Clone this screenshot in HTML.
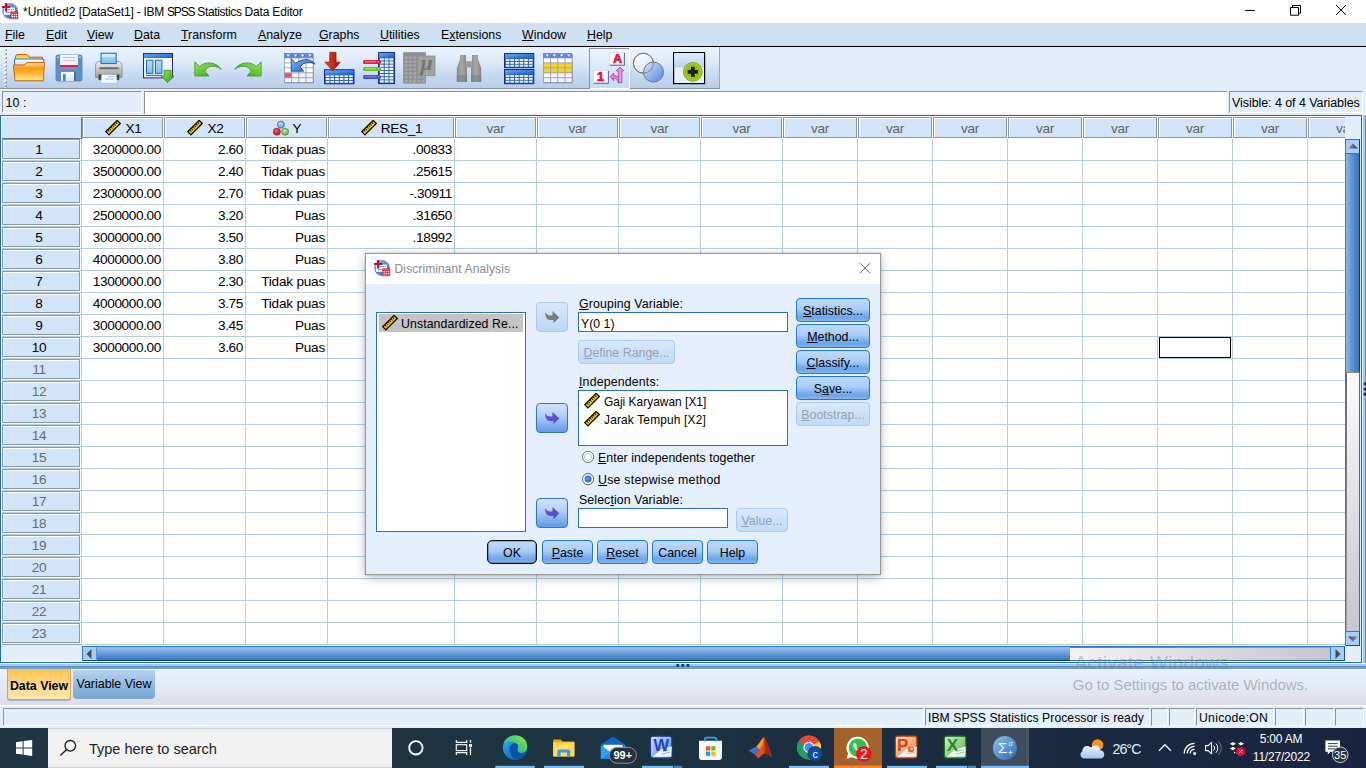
<!DOCTYPE html><html><head><meta charset="utf-8"><title>IBM SPSS Statistics Data Editor</title><style>
html,body{margin:0;padding:0}
body{width:1366px;height:768px;overflow:hidden;position:relative;background:#e4eefb;font-family:"Liberation Sans",sans-serif;font-size:12px;color:#000;line-height:1}
.a{position:absolute}
.a *{box-sizing:border-box}
div{box-sizing:border-box}
u{text-decoration:underline;text-underline-offset:1px}
#title{left:0;top:0;width:1366px;height:23px;background:#fff}
#title .t{left:23px;top:6px;font-size:12px;white-space:nowrap;letter-spacing:-.27px}
#menu{left:0;top:23px;width:1366px;height:23px;background:#cfe0f1}
#menu span{position:absolute;top:6px;font-size:12.35px;white-space:nowrap}
#mline{left:0;top:46px;width:1366px;height:1px;background:#000}
#tb{left:0;top:47px;width:720px;height:42px;background:linear-gradient(#ebf3fc 0%,#dfeaf8 35%,#c5d8f0 70%,#b6cdea 100%);border-right:1px solid #9aa7b8;border-bottom:1px solid #8e9298}
#tbline{left:0;top:89px;width:720px;height:1px;background:#eef5fd}
.rh{left:2px;width:78px;height:20px;background:#d2e4fa;border:1px solid #8c97a8;box-shadow:inset 1px 1px 0 #fff;text-align:center;font-size:13.6px;line-height:19.2px;letter-spacing:-.3px;padding-right:4px}
.ch{top:117px;height:21px;background:#d2e4fa;border:1px solid #8c97a8;box-shadow:inset 1px 1px 0 #fff;font-size:13.6px;line-height:19px;white-space:nowrap;overflow:hidden;display:flex;align-items:center;justify-content:center;letter-spacing:-.3px}
.ch span{display:block;height:19px;line-height:21.6px}
.cv{color:#626262}
.hl{left:2px;height:1px;background:#b5cce6}
.vl{top:139px;width:1px;background:#b5cce6}
.c{font-size:13.6px;text-align:right;white-space:nowrap;height:22px;line-height:24.6px}
.c.n{letter-spacing:-.36px}
.c.t{letter-spacing:-.22px}

.dl{font-size:12.3px;white-space:nowrap}
.btn{border:1px solid #1f78d8;border-radius:4px;background:linear-gradient(#bfdaf9 0%,#aacdf6 45%,#7db0ed 70%,#6ba5ea 85%,#86b8f0 100%);font-size:12.4px;line-height:24px;text-align:center;white-space:nowrap}
.btn.dis{border-color:#a8c9ee;background:linear-gradient(#dae9fb,#cbe0f8 50%,#c2dbf7);color:#93a2b4}
.btn.dflt{border:1px solid #101010;box-shadow:inset 0 0 0 .6px rgba(20,30,50,.55);border-radius:5px}
</style></head><body>
<div class="a" id="title"><span class="a t"><span style="letter-spacing:.04px">*Untitled2 </span><span style="letter-spacing:-.2px">[DataSet1] </span>- IBM <span style="letter-spacing:-1.2px">SPSS</span> <span style="letter-spacing:-.38px">Statistics </span><span style="letter-spacing:-.17px">Data Editor</span></span></div>
<svg class="a" style="left:1240px;top:0" width="120" height="23" viewBox="1240 0 120 23"><path d="M1245 10.5h10" stroke="#000" stroke-width="1"/><path d="M1290.5 7.5h8v7.7h-8z M1292.5 7.5v-2h8v7.7h-2" fill="none" stroke="#000" stroke-width="1"/><path d="M1336 5 L1346 15 M1346 5 L1336 15" stroke="#000" stroke-width="1"/></svg>
<div class="a" id="menu"><span style="left:5px"><u>F</u>ile</span><span style="left:46px"><u>E</u>dit</span><span style="left:87px"><u>V</u>iew</span><span style="left:134px"><u>D</u>ata</span><span style="left:181px"><u>T</u>ransform</span><span style="left:258px"><u>A</u>nalyze</span><span style="left:319px"><u>G</u>raphs</span><span style="left:380px"><u>U</u>tilities</span><span style="left:441px">E<u>x</u>tensions</span><span style="left:522px"><u>W</u>indow</span><span style="left:587px"><u>H</u>elp</span></div><div class="a" id="mline"></div>
<div class="a" id="tb"></div><div class="a" id="tbline"></div>
<svg class="a" style="left:0;top:46px" width="722" height="44" viewBox="0 46 722 44"><defs>
<linearGradient id="gFo" x1="0" y1="0" x2="0" y2="1"><stop offset="0" stop-color="#ffe6c4"/><stop offset=".28" stop-color="#ff9a14"/><stop offset=".6" stop-color="#ffb638"/><stop offset="1" stop-color="#fff08c"/></linearGradient>
<linearGradient id="gFb" x1="0" y1="0" x2="0" y2="1"><stop offset="0" stop-color="#ffc61a"/><stop offset="1" stop-color="#fff0a0"/></linearGradient>
<linearGradient id="gPa" x1="0" y1="0" x2="0" y2="1"><stop offset="0" stop-color="#ffffff"/><stop offset="1" stop-color="#b8daf5"/></linearGradient>
<linearGradient id="gPr" x1="0" y1="0" x2="0" y2="1"><stop offset="0" stop-color="#f2f2f2"/><stop offset=".5" stop-color="#c4c4c4"/><stop offset="1" stop-color="#9a9a9a"/></linearGradient>
<linearGradient id="gHd" x1="0" y1="0" x2="1" y2="1"><stop offset="0" stop-color="#6aaaf0"/><stop offset="1" stop-color="#1a5ad0"/></linearGradient>
<linearGradient id="gGr" x1="0" y1="0" x2="1" y2="1"><stop offset="0" stop-color="#9be85a"/><stop offset="1" stop-color="#2f9c14"/></linearGradient>
<linearGradient id="gRd" x1="0" y1="0" x2="1" y2="0"><stop offset="0" stop-color="#e84a30"/><stop offset="1" stop-color="#98140a"/></linearGradient>
<linearGradient id="gBl" x1="0" y1="0" x2="1" y2="1"><stop offset="0" stop-color="#7ab4f4"/><stop offset="1" stop-color="#1e5cc8"/></linearGradient>
<linearGradient id="gWb" x1="0" y1="0" x2="0" y2="1"><stop offset="0" stop-color="#ffffff"/><stop offset="1" stop-color="#dfe3ea"/></linearGradient>
<linearGradient id="gLb" x1="0" y1="0" x2="0" y2="1"><stop offset="0" stop-color="#b6dcf4"/><stop offset="1" stop-color="#7fc0ea"/></linearGradient>
<linearGradient id="gC1" x1="0" y1="0" x2="1" y2="1"><stop offset="0" stop-color="#ffffff"/><stop offset="1" stop-color="#d4dff2"/></linearGradient>
<linearGradient id="gC2" x1="0" y1="0" x2="1" y2="1"><stop offset="0" stop-color="#d6e6fb"/><stop offset="1" stop-color="#4f84e0"/></linearGradient>
<linearGradient id="gBx" x1="0" y1="0" x2="0" y2="1"><stop offset="0" stop-color="#e4eefb"/><stop offset="1" stop-color="#b9d0ee"/></linearGradient>
<linearGradient id="gPb" x1="0" y1="0" x2="0" y2="1"><stop offset="0" stop-color="#edf4fc"/><stop offset="1" stop-color="#c6daf1"/></linearGradient>
<linearGradient id="gBn" x1="0" y1="0" x2="1" y2="0"><stop offset="0" stop-color="#8c8c8c"/><stop offset=".5" stop-color="#a8a8a8"/><stop offset="1" stop-color="#868686"/></linearGradient>
<pattern id="pDot" x="4" y="48" width="4" height="4" patternUnits="userSpaceOnUse"><rect x="1" y="1" width="2" height="2" fill="#8c9cb4"/><rect x="0" y="0" width="2" height="2" fill="#ffffff"/></pattern>
</defs><rect x="4" y="48" width="3" height="40" fill="url(#pDot)"/><path d="M15.5 62 L15.5 57 Q15.5 54.5 18 54.5 L26 54.5 Q27.8 54.5 28.5 56 L29 57.2 L42.5 57.2 L42.5 62Z" fill="url(#gFb)" stroke="#c4640a" stroke-width="1"/><path d="M14.5 66 L14.5 59 L43.8 59 L43.8 66Z" fill="url(#gPa)" stroke="#2a6ed6" stroke-width="1"/><path d="M13.4 65 L24.6 65 L26.6 62.6 L44.6 62.6 L43.2 80.8 L15 80.8Z" fill="url(#gFo)" stroke="#c4640a" stroke-width="1" stroke-linejoin="round"/><rect x="56" y="55" width="26" height="26" rx="2" fill="#5c90c8"/><rect x="56" y="55" width="26" height="26" rx="2" fill="none" stroke="#4a7fba" stroke-width=".8"/><rect x="60" y="55" width="18" height="10.2" fill="#eef3fa"/><path d="M63 57.6h12M63 60.6h12" stroke="#b4bcc8" stroke-width=".9"/><rect x="60" y="65" width="18" height="3" fill="#d81e50"/><rect x="60" y="67.4" width="18" height=".9" fill="#f090a8"/><rect x="61" y="72" width="15.6" height="9" fill="url(#gWb)"/><rect x="74" y="72" width="2.6" height="9" fill="#3f6ea8"/><rect x="63" y="74" width="2.6" height="7" fill="#4a80c0"/><rect x="57.2" y="56.6" width="1.8" height="1.2" fill="#dfe8f4"/><rect x="79" y="56.6" width="1.8" height="1.2" fill="#dfe8f4"/><path d="M95.5 77.5 L95.5 66 Q95.5 61.5 100 61.5 L117.5 61.5 Q122 61.5 122 66 L122 77.5Z" fill="url(#gPr)" stroke="#8a8a8a" stroke-width=".8"/><rect x="101" y="53.2" width="15.2" height="10.4" fill="url(#gLb)" stroke="#1c66d4" stroke-width="1"/><rect x="102" y="54.2" width="13.2" height="3" fill="#e8f4fc" opacity=".7"/><rect x="99.5" y="67.2" width="18.5" height="2.2" fill="#6e6e6e"/><rect x="118.2" y="67.6" width="1.6" height="1.6" fill="#40c040"/><rect x="98.6" y="74.5" width="20.6" height="5.6" fill="#3c3c3c"/><path d="M101.6 74.6 L116.4 74.6 L117.4 83.4 L100.8 83.4Z" fill="#f2f8fd" stroke="#9ab4d0" stroke-width=".7"/><path d="M108 76.6h6M105 79h9" stroke="#a8b4c4" stroke-width=".9"/><rect x="143.5" y="53.5" width="29" height="24.4" fill="url(#gWb)" stroke="#2a2a6e" stroke-width="1"/><rect x="144" y="54" width="28" height="4" fill="url(#gHd)"/><rect x="146.5" y="60.3" width="6.4" height="13" fill="url(#gLb)" stroke="#1a6ad8" stroke-width="1"/><rect x="155.5" y="60.3" width="6.4" height="13" fill="url(#gLb)" stroke="#1a6ad8" stroke-width="1"/><path d="M146 75.4h16.4" stroke="#1a6ad8" stroke-width="1"/><path d="M164.2 70.4 L171 70.4 L171 76.2 L174 76.2 L167.6 82.6 L161.4 76.2 L164.2 76.2Z" fill="url(#gGr)" stroke="#2c8c14" stroke-width=".8" stroke-linejoin="round"/><path transform="translate(194.8 62)" d="M0 0 L4.9 4.5 C8 1.5 12 0.6 15.4 1 C20 1.3 24 3.5 26.4 7.3 C23 4.6 19 3.6 15.4 4.6 C12.5 5.5 11 7 10.2 9.2 L14 14 L0 14 Z" fill="url(#gGr)" stroke="#3a9a1c" stroke-width=".8" stroke-linejoin="round"/><path transform="translate(261.2 62) scale(-1 1)" d="M0 0 L4.9 4.5 C8 1.5 12 0.6 15.4 1 C20 1.3 24 3.5 26.4 7.3 C23 4.6 19 3.6 15.4 4.6 C12.5 5.5 11 7 10.2 9.2 L14 14 L0 14 Z" fill="url(#gGr)" stroke="#3a9a1c" stroke-width=".8" stroke-linejoin="round"/><rect x="284.6" y="53.7" width="28.9" height="29.5" fill="#3c4a78" opacity=".8"/><rect x="284" y="53.1" width="28.9" height="29.5" fill="#9aa0ae"/><rect x="284" y="53.1" width="28.9" height="4.6" fill="#5a86e0"/><path d="M286.5 54.5 h3.4 l-1.7 2.2z" fill="#fff"/><rect x="284.9" y="58.40" width="6.2" height="4" fill="#ffffff"/><rect x="284.9" y="63.35" width="6.2" height="4" fill="#ffffff"/><rect x="284.9" y="68.30" width="6.2" height="4" fill="#ffffff"/><rect x="284.9" y="73.25" width="6.2" height="4" fill="#f0506a"/><rect x="284.9" y="78.20" width="6.2" height="4" fill="#f2f3f8"/><path d="M293.7 54.5 h3.4 l-1.7 2.2z" fill="#fff"/><rect x="292.1" y="58.40" width="6.2" height="4" fill="#ffffff"/><rect x="292.1" y="63.35" width="6.2" height="4" fill="#ffffff"/><rect x="292.1" y="68.30" width="6.2" height="4" fill="#ffffff"/><rect x="292.1" y="73.25" width="6.2" height="4" fill="#f2f3f8"/><rect x="292.1" y="78.20" width="6.2" height="4" fill="#f2f3f8"/><path d="M300.9 54.5 h3.4 l-1.7 2.2z" fill="#fff"/><rect x="299.3" y="58.40" width="6.2" height="4" fill="#ffffff"/><rect x="299.3" y="63.35" width="6.2" height="4" fill="#ffffff"/><rect x="299.3" y="68.30" width="6.2" height="4" fill="#ffffff"/><rect x="299.3" y="73.25" width="6.2" height="4" fill="#f2f3f8"/><rect x="299.3" y="78.20" width="6.2" height="4" fill="#f2f3f8"/><path d="M308.1 54.5 h3.4 l-1.7 2.2z" fill="#fff"/><rect x="306.5" y="58.40" width="6.2" height="4" fill="#ffffff"/><rect x="306.5" y="63.35" width="6.2" height="4" fill="#ffffff"/><rect x="306.5" y="68.30" width="6.2" height="4" fill="#ffffff"/><rect x="306.5" y="73.25" width="6.2" height="4" fill="#f2f3f8"/><rect x="306.5" y="78.20" width="6.2" height="4" fill="#f2f3f8"/><path transform="translate(291.2 58.6)" d="M0 0 L0 12.6 L12.6 12.6 L9 8.4 C10.5 5.5 14 3.6 18 3.8 C20.5 4 22.5 4.6 23.8 5.6 C21.5 2 17.5 0.6 13.5 1 C9.5 1.4 6.5 3 4.6 4.8 Z" fill="url(#gBl)" stroke="#1a3c90" stroke-width=".8" stroke-linejoin="round"/><rect x="324.5" y="69.8" width="29.5" height="14" fill="#1c5cd0" stroke="#1a2880" stroke-width="1"/><rect x="325.0" y="70.3" width="28.5" height="4.4" fill="url(#gHd)"/><rect x="325.80" y="75.30" width="3.65" height="1.85" fill="#fff"/><rect x="325.80" y="78.10" width="3.65" height="1.85" fill="#fff"/><rect x="325.80" y="80.90" width="3.65" height="1.85" fill="#fff"/><rect x="330.45" y="75.30" width="3.65" height="1.85" fill="#fff"/><rect x="330.45" y="78.10" width="3.65" height="1.85" fill="#fff"/><rect x="330.45" y="80.90" width="3.65" height="1.85" fill="#fff"/><rect x="335.10" y="75.30" width="3.65" height="1.85" fill="#fff"/><rect x="335.10" y="78.10" width="3.65" height="1.85" fill="#fff"/><rect x="335.10" y="80.90" width="3.65" height="1.85" fill="#fff"/><rect x="339.75" y="75.30" width="3.65" height="1.85" fill="#fff"/><rect x="339.75" y="78.10" width="3.65" height="1.85" fill="#fff"/><rect x="339.75" y="80.90" width="3.65" height="1.85" fill="#fff"/><rect x="344.40" y="75.30" width="3.65" height="1.85" fill="#fff"/><rect x="344.40" y="78.10" width="3.65" height="1.85" fill="#fff"/><rect x="344.40" y="80.90" width="3.65" height="1.85" fill="#fff"/><rect x="349.05" y="75.30" width="3.65" height="1.85" fill="#fff"/><rect x="349.05" y="78.10" width="3.65" height="1.85" fill="#fff"/><rect x="349.05" y="80.90" width="3.65" height="1.85" fill="#fff"/><path d="M329.8 52.4 L336 52.4 L336 62.2 L340.2 62.2 L332.8 70.8 L325 62.2 L329.8 62.2Z" fill="url(#gRd)" stroke="#8a1a0c" stroke-width=".8" stroke-linejoin="round"/><rect x="378.6" y="52.6" width="16" height="31" fill="#1c5cd0" stroke="#1a2880" stroke-width="1"/><rect x="379.1" y="53.1" width="15" height="4.6" fill="url(#gHd)"/><rect x="379.90" y="58.30" width="3.80" height="2.20" fill="#fff"/><rect x="379.90" y="61.45" width="3.80" height="2.20" fill="#fff"/><rect x="379.90" y="64.60" width="3.80" height="2.20" fill="#fff"/><rect x="379.90" y="67.75" width="3.80" height="2.20" fill="#fff"/><rect x="379.90" y="70.90" width="3.80" height="2.20" fill="#fff"/><rect x="379.90" y="74.05" width="3.80" height="2.20" fill="#fff"/><rect x="379.90" y="77.20" width="3.80" height="2.20" fill="#fff"/><rect x="379.90" y="80.35" width="3.80" height="2.20" fill="#fff"/><rect x="384.70" y="58.30" width="3.80" height="2.20" fill="#fff"/><rect x="384.70" y="61.45" width="3.80" height="2.20" fill="#fff"/><rect x="384.70" y="64.60" width="3.80" height="2.20" fill="#fff"/><rect x="384.70" y="67.75" width="3.80" height="2.20" fill="#fff"/><rect x="384.70" y="70.90" width="3.80" height="2.20" fill="#fff"/><rect x="384.70" y="74.05" width="3.80" height="2.20" fill="#fff"/><rect x="384.70" y="77.20" width="3.80" height="2.20" fill="#fff"/><rect x="384.70" y="80.35" width="3.80" height="2.20" fill="#fff"/><rect x="389.50" y="58.30" width="3.80" height="2.20" fill="#fff"/><rect x="389.50" y="61.45" width="3.80" height="2.20" fill="#fff"/><rect x="389.50" y="64.60" width="3.80" height="2.20" fill="#fff"/><rect x="389.50" y="67.75" width="3.80" height="2.20" fill="#fff"/><rect x="389.50" y="70.90" width="3.80" height="2.20" fill="#fff"/><rect x="389.50" y="74.05" width="3.80" height="2.20" fill="#fff"/><rect x="389.50" y="77.20" width="3.80" height="2.20" fill="#fff"/><rect x="389.50" y="80.35" width="3.80" height="2.20" fill="#fff"/><rect x="363" y="60.1" width="18" height="4" rx="1.6" fill="#e21e4c"/><path d="M365 61.800000000000004h11M377.4 61.800000000000004h1.6" stroke="#f4a060" stroke-width="1"/><rect x="363" y="67.1" width="18" height="4" rx="1.6" fill="#58c61e"/><path d="M365 68.8h11M377.4 68.8h1.6" stroke="#b8ec80" stroke-width="1"/><rect x="363" y="75" width="18" height="4" rx="1.6" fill="#3a58e0"/><path d="M365 76.7h11M377.4 76.7h1.6" stroke="#a070e8" stroke-width="1"/><rect x="403.1" y="52.2" width="22.8" height="31.4" fill="#8e8e8e"/><rect x="404.6" y="56.4" width="3" height="2.6" fill="#a6a6a6"/><rect x="404.6" y="60.3" width="3" height="2.6" fill="#a6a6a6"/><rect x="404.6" y="64.2" width="3" height="2.6" fill="#a6a6a6"/><rect x="404.6" y="68.1" width="3" height="2.6" fill="#a6a6a6"/><rect x="404.6" y="72.0" width="3" height="2.6" fill="#a6a6a6"/><rect x="404.6" y="75.9" width="3" height="2.6" fill="#a6a6a6"/><rect x="404.6" y="79.8" width="3" height="2.6" fill="#a6a6a6"/><rect x="408.9" y="56.4" width="3" height="2.6" fill="#a6a6a6"/><rect x="408.9" y="60.3" width="3" height="2.6" fill="#a6a6a6"/><rect x="408.9" y="64.2" width="3" height="2.6" fill="#a6a6a6"/><rect x="408.9" y="68.1" width="3" height="2.6" fill="#a6a6a6"/><rect x="408.9" y="72.0" width="3" height="2.6" fill="#a6a6a6"/><rect x="408.9" y="75.9" width="3" height="2.6" fill="#a6a6a6"/><rect x="408.9" y="79.8" width="3" height="2.6" fill="#a6a6a6"/><rect x="413.2" y="56.4" width="3" height="2.6" fill="#a6a6a6"/><rect x="413.2" y="60.3" width="3" height="2.6" fill="#a6a6a6"/><rect x="413.2" y="64.2" width="3" height="2.6" fill="#a6a6a6"/><rect x="413.2" y="68.1" width="3" height="2.6" fill="#a6a6a6"/><rect x="413.2" y="72.0" width="3" height="2.6" fill="#a6a6a6"/><rect x="413.2" y="75.9" width="3" height="2.6" fill="#a6a6a6"/><rect x="413.2" y="79.8" width="3" height="2.6" fill="#a6a6a6"/><rect x="417.5" y="56.4" width="3" height="2.6" fill="#a6a6a6"/><rect x="417.5" y="60.3" width="3" height="2.6" fill="#a6a6a6"/><rect x="417.5" y="64.2" width="3" height="2.6" fill="#a6a6a6"/><rect x="417.5" y="68.1" width="3" height="2.6" fill="#a6a6a6"/><rect x="417.5" y="72.0" width="3" height="2.6" fill="#a6a6a6"/><rect x="417.5" y="75.9" width="3" height="2.6" fill="#a6a6a6"/><rect x="417.5" y="79.8" width="3" height="2.6" fill="#a6a6a6"/><rect x="421.8" y="56.4" width="3" height="2.6" fill="#a6a6a6"/><rect x="421.8" y="60.3" width="3" height="2.6" fill="#a6a6a6"/><rect x="421.8" y="64.2" width="3" height="2.6" fill="#a6a6a6"/><rect x="421.8" y="68.1" width="3" height="2.6" fill="#a6a6a6"/><rect x="421.8" y="72.0" width="3" height="2.6" fill="#a6a6a6"/><rect x="421.8" y="75.9" width="3" height="2.6" fill="#a6a6a6"/><rect x="421.8" y="79.8" width="3" height="2.6" fill="#a6a6a6"/><rect x="417.8" y="56" width="17.2" height="19.7" fill="#a2a2a2" stroke="#8c8c8c" stroke-width=".8"/><text x="420.6" y="70.4" font-family="Liberation Serif,serif" font-style="italic" font-weight="bold" font-size="22" fill="#747474">μ</text><path d="M460 55 L466 55 L466 59 L467 68 L467 82 L456.8 82 L456.8 68 L460 59Z" fill="url(#gBn)"/><path d="M472 55 L478 55 L478 59 L481.2 68 L481.2 82 L471 82 L471 68 L472 59Z" fill="url(#gBn)"/><rect x="466.5" y="61.2" width="5" height="6.2" fill="#9a9a9a"/><rect x="456.8" y="75" width="10.2" height="7" fill="#7a7a7a" opacity=".55"/><rect x="471" y="75" width="10.2" height="7" fill="#7a7a7a" opacity=".55"/><rect x="504.5" y="53.5" width="29.3" height="14.2" fill="#1c5cd0" stroke="#1a2880" stroke-width="1"/><rect x="505.0" y="54.0" width="28.3" height="4.4" fill="url(#gHd)"/><rect x="505.80" y="59.00" width="3.62" height="1.92" fill="#fff"/><rect x="505.80" y="61.87" width="3.62" height="1.92" fill="#fff"/><rect x="505.80" y="64.73" width="3.62" height="1.92" fill="#fff"/><rect x="510.42" y="59.00" width="3.62" height="1.92" fill="#fff"/><rect x="510.42" y="61.87" width="3.62" height="1.92" fill="#fff"/><rect x="510.42" y="64.73" width="3.62" height="1.92" fill="#fff"/><rect x="515.03" y="59.00" width="3.62" height="1.92" fill="#fff"/><rect x="515.03" y="61.87" width="3.62" height="1.92" fill="#fff"/><rect x="515.03" y="64.73" width="3.62" height="1.92" fill="#fff"/><rect x="519.65" y="59.00" width="3.62" height="1.92" fill="#fff"/><rect x="519.65" y="61.87" width="3.62" height="1.92" fill="#fff"/><rect x="519.65" y="64.73" width="3.62" height="1.92" fill="#fff"/><rect x="524.27" y="59.00" width="3.62" height="1.92" fill="#fff"/><rect x="524.27" y="61.87" width="3.62" height="1.92" fill="#fff"/><rect x="524.27" y="64.73" width="3.62" height="1.92" fill="#fff"/><rect x="528.88" y="59.00" width="3.62" height="1.92" fill="#fff"/><rect x="528.88" y="61.87" width="3.62" height="1.92" fill="#fff"/><rect x="528.88" y="64.73" width="3.62" height="1.92" fill="#fff"/><rect x="504.5" y="69.5" width="29.3" height="14.2" fill="#1c5cd0" stroke="#1a2880" stroke-width="1"/><rect x="505.0" y="70.0" width="28.3" height="4.4" fill="url(#gHd)"/><rect x="505.80" y="75.00" width="3.62" height="1.92" fill="#fff"/><rect x="505.80" y="77.87" width="3.62" height="1.92" fill="#fff"/><rect x="505.80" y="80.73" width="3.62" height="1.92" fill="#fff"/><rect x="510.42" y="75.00" width="3.62" height="1.92" fill="#fff"/><rect x="510.42" y="77.87" width="3.62" height="1.92" fill="#fff"/><rect x="510.42" y="80.73" width="3.62" height="1.92" fill="#fff"/><rect x="515.03" y="75.00" width="3.62" height="1.92" fill="#fff"/><rect x="515.03" y="77.87" width="3.62" height="1.92" fill="#fff"/><rect x="515.03" y="80.73" width="3.62" height="1.92" fill="#fff"/><rect x="519.65" y="75.00" width="3.62" height="1.92" fill="#fff"/><rect x="519.65" y="77.87" width="3.62" height="1.92" fill="#fff"/><rect x="519.65" y="80.73" width="3.62" height="1.92" fill="#fff"/><rect x="524.27" y="75.00" width="3.62" height="1.92" fill="#fff"/><rect x="524.27" y="77.87" width="3.62" height="1.92" fill="#fff"/><rect x="524.27" y="80.73" width="3.62" height="1.92" fill="#fff"/><rect x="528.88" y="75.00" width="3.62" height="1.92" fill="#fff"/><rect x="528.88" y="77.87" width="3.62" height="1.92" fill="#fff"/><rect x="528.88" y="80.73" width="3.62" height="1.92" fill="#fff"/><rect x="543.6" y="53.7" width="28.9" height="29.5" fill="#3c4a78" opacity=".8"/><rect x="543" y="53.1" width="28.9" height="29.5" fill="#9aa0ae"/><rect x="543" y="53.1" width="28.9" height="4.6" fill="#5a86e0"/><path d="M545.5 54.5 h3.4 l-1.7 2.2z" fill="#fff"/><rect x="543.9" y="58.40" width="6.2" height="4" fill="#ffffff"/><rect x="543.9" y="63.35" width="6.2" height="4" fill="#f9d424"/><rect x="543.9" y="68.30" width="6.2" height="4" fill="#f9d424"/><rect x="543.9" y="73.25" width="6.2" height="4" fill="#f2f3f8"/><rect x="543.9" y="78.20" width="6.2" height="4" fill="#f2f3f8"/><path d="M552.7 54.5 h3.4 l-1.7 2.2z" fill="#fff"/><rect x="551.1" y="58.40" width="6.2" height="4" fill="#ffffff"/><rect x="551.1" y="63.35" width="6.2" height="4" fill="#f9d424"/><rect x="551.1" y="68.30" width="6.2" height="4" fill="#f9d424"/><rect x="551.1" y="73.25" width="6.2" height="4" fill="#f2f3f8"/><rect x="551.1" y="78.20" width="6.2" height="4" fill="#f2f3f8"/><path d="M559.9 54.5 h3.4 l-1.7 2.2z" fill="#fff"/><rect x="558.3" y="58.40" width="6.2" height="4" fill="#ffffff"/><rect x="558.3" y="63.35" width="6.2" height="4" fill="#f9d424"/><rect x="558.3" y="68.30" width="6.2" height="4" fill="#f9d424"/><rect x="558.3" y="73.25" width="6.2" height="4" fill="#f2f3f8"/><rect x="558.3" y="78.20" width="6.2" height="4" fill="#f2f3f8"/><path d="M567.1 54.5 h3.4 l-1.7 2.2z" fill="#fff"/><rect x="565.5" y="58.40" width="6.2" height="4" fill="#ffffff"/><rect x="565.5" y="63.35" width="6.2" height="4" fill="#f9d424"/><rect x="565.5" y="68.30" width="6.2" height="4" fill="#f9d424"/><rect x="565.5" y="73.25" width="6.2" height="4" fill="#f2f3f8"/><rect x="565.5" y="78.20" width="6.2" height="4" fill="#f2f3f8"/><rect x="589.5" y="48.5" width="39.5" height="39.5" fill="url(#gPb)"/><path d="M589.5 88 L589.5 48.5 L629 48.5" fill="none" stroke="#8e939c" stroke-width="1"/><path d="M590 88.5 L629.5 88.5 L629.5 49" fill="none" stroke="#ffffff" stroke-width="1"/><rect x="609.8" y="52.8" width="15" height="12.8" fill="#34447c"/><rect x="609.2" y="52.2" width="14.7" height="12.5" fill="#fdfdff" stroke="#c8ccd8" stroke-width=".5"/><text x="617.5" y="63.2" text-anchor="middle" font-family="Liberation Sans,sans-serif" font-weight="bold" font-size="12.5" fill="#e6104c" stroke="#e6104c" stroke-width=".7">A</text><rect x="593.8" y="70.8" width="15" height="12.8" fill="#34447c"/><rect x="593.2" y="70.2" width="14.7" height="12.5" fill="#fdfdff" stroke="#c8ccd8" stroke-width=".5"/><text x="600.6" y="81" text-anchor="middle" font-family="Liberation Sans,sans-serif" font-weight="bold" font-size="13" fill="#e6104c" stroke="#e6104c" stroke-width=".7">1</text><path d="M610.1 76.7 L613.7 73.1 L613.7 75.4 C616.6 75.4 619 77 619.8 80.2 L618.4 82.6 C617.8 79.6 616.2 78.4 613.7 78.3 L613.7 80.8 Z" fill="#dc84d4" stroke="#a040a0" stroke-width=".8" stroke-linejoin="round"/><path d="M620 67 L623.8 70.8 L621.9 70.8 L621.9 82.7 L618.3 82.7 L618.3 70.8 L616.1 70.8 Z" fill="#dc84d4" stroke="#a040a0" stroke-width=".8" stroke-linejoin="round"/><path d="M620.1 69.4v12.4" stroke="#eab0e6" stroke-width="1.2"/><circle cx="643.4" cy="63.2" r="10" fill="url(#gC1)" stroke="#74747c" stroke-width="1"/><circle cx="653.5" cy="72.1" r="10" fill="url(#gC2)" stroke="#74747c" stroke-width="1"/><circle cx="643.4" cy="63.2" r="10" fill="none" stroke="#74747c" stroke-width="1" opacity=".8"/><rect x="673.6" y="52.6" width="31" height="31" fill="#e6effb" stroke="#000" stroke-width="1.2"/><rect x="674.2" y="53.2" width="29.8" height="14.2" fill="url(#gBx)"/><circle cx="692.8" cy="71.9" r="9.4" fill="#a8cc20" stroke="#86a81c" stroke-width="1"/><circle cx="692.8" cy="71.9" r="7.6" fill="#98c014"/><path d="M691 66.8h3.6v3.3h3.3v3.6h-3.3v3.3h-3.6v-3.3h-3.3v-3.6h3.3z" fill="#1c1c1c"/></svg>
<svg class="a" style="left:2px;top:3px" width="17" height="17" viewBox="0 0 17 17"><defs><linearGradient id="gAi2" x1="0" y1="0" x2="1" y2="1"><stop offset="0" stop-color="#86bce6"/><stop offset="1" stop-color="#2a66ac"/></linearGradient></defs><circle cx="8" cy="8" r="7.9" fill="url(#gAi2)"/><rect x="2" y="4.6" width="11" height="7.2" fill="#f4f8fd"/><path d="M4 6.6h8M4 9.6h8" stroke="#3a78c8" stroke-width="1" stroke-dasharray="1.4 1"/><rect x="0" y="3" width="8.2" height="1.9" fill="#d8002c"/><rect x="3.1" y="0" width="2.1" height="8.6" fill="#d8002c"/><rect x="8.4" y="8.4" width="7.8" height="7.8" fill="#d81e40"/><rect x="9.4" y="9.3" width="5.8" height="1" fill="#ec6a7c"/><g fill="#fff"><rect x="9.4" y="11.1" width="1.6" height="1.2"/><rect x="11.7" y="11.1" width="1.4" height="1.2"/><rect x="13.8" y="11.1" width="1.4" height="1.2"/><rect x="9.4" y="13" width="1.6" height="1.2"/><rect x="11.7" y="13" width="1.4" height="1.2"/><rect x="13.8" y="13" width="1.4" height="1.2"/><rect x="9.4" y="14.8" width="1.6" height=".9" opacity=".6"/><rect x="11.7" y="14.8" width="1.4" height=".9" opacity=".6"/><rect x="13.8" y="14.8" width="1.4" height=".9" opacity=".6"/></g></svg>
<div class="a" style="left:2px;top:91px;width:140px;height:22px;border-top:1px solid #8e9298;border-left:1px solid #8e9298;border-right:1px solid #fff;border-bottom:1px solid #fff;background:#e4eefb;font-size:12.5px;line-height:22px;padding-left:2.5px;word-spacing:0px">10 :</div>
<div class="a" style="left:144px;top:91px;width:1083px;height:23px;border-top:1px solid #8e9298;border-left:1px solid #8e9298;background:#fff"></div>
<div class="a" style="left:1229px;top:91px;width:134px;height:22px;border-top:1px solid #8e9298;border-left:1px solid #8e9298;border-right:1px solid #fff;border-bottom:1px solid #fff;background:#e4eefb;font-size:12.5px;line-height:22px;padding-left:2px;white-space:nowrap;overflow:hidden;letter-spacing:-.07px">Visible: 4 of 4 Variables</div>
<div class="a" style="left:0;top:115px;width:1362px;height:548px;border:1px solid #1e6bbf;background:#fff"></div>
<div class="a" style="left:1345px;top:116px;width:16px;height:546px;background:#e4eefb"></div>
<div class="a" style="left:2px;top:117px;width:80px;height:22px;background:#d2e4fa;border-right:1px solid #6b7582;border-bottom:1px solid #6b7582"></div>
<div class="a" style="left:0;top:0;width:1345px;height:645px;overflow:hidden"><div class="a ch" style="left:82px;width:81px"><svg width="16" height="16" viewBox="0 0 16 16" style="position:absolute;left:22.4px;top:2px"><g transform="rotate(-45 8 7.6)"><rect x="0" y="5.4" width="16" height="4.4" fill="#fac800" stroke="#0c0c08" stroke-width="1.3"/><path d="M2.6 5.6v2.3M4.8 5.6v2.3M7 5.6v2.3M9.2 5.6v2.3M11.4 5.6v2.3M13.6 5.6v2.3" stroke="#2a2a08" stroke-width="1"/></g></svg><span style="position:absolute;left:42.6px;top:0">X1</span></div><div class="a ch" style="left:164px;width:81px"><svg width="16" height="16" viewBox="0 0 16 16" style="position:absolute;left:22.4px;top:2px"><g transform="rotate(-45 8 7.6)"><rect x="0" y="5.4" width="16" height="4.4" fill="#fac800" stroke="#0c0c08" stroke-width="1.3"/><path d="M2.6 5.6v2.3M4.8 5.6v2.3M7 5.6v2.3M9.2 5.6v2.3M11.4 5.6v2.3M13.6 5.6v2.3" stroke="#2a2a08" stroke-width="1"/></g></svg><span style="position:absolute;left:42.6px;top:0">X2</span></div><div class="a ch" style="left:246px;width:81px"><svg width="16" height="16" viewBox="0 0 16 16" style="position:absolute;left:25.9px;top:2px"><defs><radialGradient id="rb" cx=".4" cy=".35" r=".7"><stop offset="0" stop-color="#c4dcf8"/><stop offset="1" stop-color="#5a96e0"/></radialGradient><radialGradient id="rr" cx=".4" cy=".35" r=".7"><stop offset="0" stop-color="#f06068"/><stop offset="1" stop-color="#c01020"/></radialGradient><radialGradient id="rg" cx=".4" cy=".35" r=".7"><stop offset="0" stop-color="#c8e4a0"/><stop offset="1" stop-color="#6aa838"/></radialGradient></defs><circle cx="7.9" cy="4.6" r="3.5" fill="url(#rb)" stroke="#2a6ac8" stroke-width=".8"/><circle cx="3.9" cy="11.7" r="3.5" fill="url(#rr)" stroke="#b01020" stroke-width=".8"/><circle cx="12.1" cy="11.7" r="3.5" fill="url(#rg)" stroke="#4a9028" stroke-width=".8"/></svg><span style="position:absolute;left:45.4px;top:0">Y</span></div><div class="a ch" style="left:328px;width:126px"><svg width="16" height="16" viewBox="0 0 16 16" style="position:absolute;left:31.799999999999997px;top:2px"><g transform="rotate(-45 8 7.6)"><rect x="0" y="5.4" width="16" height="4.4" fill="#fac800" stroke="#0c0c08" stroke-width="1.3"/><path d="M2.6 5.6v2.3M4.8 5.6v2.3M7 5.6v2.3M9.2 5.6v2.3M11.4 5.6v2.3M13.6 5.6v2.3" stroke="#2a2a08" stroke-width="1"/></g></svg><span style="position:absolute;left:51.8px;top:0">RES_1</span></div><div class="a ch cv" style="left:455px;width:81px"><span>var</span></div><div class="a ch cv" style="left:537px;width:81px"><span>var</span></div><div class="a ch cv" style="left:619px;width:81px"><span>var</span></div><div class="a ch cv" style="left:701px;width:81px"><span>var</span></div><div class="a ch cv" style="left:783px;width:74px"><span>var</span></div><div class="a ch cv" style="left:858px;width:74px"><span>var</span></div><div class="a ch cv" style="left:933px;width:74px"><span>var</span></div><div class="a ch cv" style="left:1008px;width:74px"><span>var</span></div><div class="a ch cv" style="left:1083px;width:74px"><span>var</span></div><div class="a ch cv" style="left:1158px;width:74px"><span>var</span></div><div class="a ch cv" style="left:1233px;width:74px"><span>var</span></div><div class="a ch cv" style="left:1308px;width:74px"><span>var</span></div><div class="a hl" style="top:160px;width:1343px"></div><div class="a hl" style="top:182px;width:1343px"></div><div class="a hl" style="top:204px;width:1343px"></div><div class="a hl" style="top:226px;width:1343px"></div><div class="a hl" style="top:248px;width:1343px"></div><div class="a hl" style="top:270px;width:1343px"></div><div class="a hl" style="top:292px;width:1343px"></div><div class="a hl" style="top:314px;width:1343px"></div><div class="a hl" style="top:336px;width:1343px"></div><div class="a hl" style="top:358px;width:1343px"></div><div class="a hl" style="top:380px;width:1343px"></div><div class="a hl" style="top:402px;width:1343px"></div><div class="a hl" style="top:424px;width:1343px"></div><div class="a hl" style="top:446px;width:1343px"></div><div class="a hl" style="top:468px;width:1343px"></div><div class="a hl" style="top:490px;width:1343px"></div><div class="a hl" style="top:512px;width:1343px"></div><div class="a hl" style="top:534px;width:1343px"></div><div class="a hl" style="top:556px;width:1343px"></div><div class="a hl" style="top:578px;width:1343px"></div><div class="a hl" style="top:600px;width:1343px"></div><div class="a hl" style="top:622px;width:1343px"></div><div class="a hl" style="top:644px;width:1343px"></div><div class="a vl" style="left:81px;height:505px"></div><div class="a vl" style="left:163px;height:505px"></div><div class="a vl" style="left:245px;height:505px"></div><div class="a vl" style="left:327px;height:505px"></div><div class="a vl" style="left:454px;height:505px"></div><div class="a vl" style="left:536px;height:505px"></div><div class="a vl" style="left:618px;height:505px"></div><div class="a vl" style="left:700px;height:505px"></div><div class="a vl" style="left:782px;height:505px"></div><div class="a vl" style="left:857px;height:505px"></div><div class="a vl" style="left:932px;height:505px"></div><div class="a vl" style="left:1007px;height:505px"></div><div class="a vl" style="left:1082px;height:505px"></div><div class="a vl" style="left:1157px;height:505px"></div><div class="a vl" style="left:1232px;height:505px"></div><div class="a vl" style="left:1307px;height:505px"></div><div class="a vl" style="left:1382px;height:505px"></div><div class="a rh" style="top:139px;color:#000">1</div><div class="a rh" style="top:161px;color:#000">2</div><div class="a rh" style="top:183px;color:#000">3</div><div class="a rh" style="top:205px;color:#000">4</div><div class="a rh" style="top:227px;color:#000">5</div><div class="a rh" style="top:249px;color:#000">6</div><div class="a rh" style="top:271px;color:#000">7</div><div class="a rh" style="top:293px;color:#000">8</div><div class="a rh" style="top:315px;color:#000">9</div><div class="a rh" style="top:337px;color:#000">10</div><div class="a rh" style="top:359px;color:#6a6a6a">11</div><div class="a rh" style="top:381px;color:#6a6a6a">12</div><div class="a rh" style="top:403px;color:#6a6a6a">13</div><div class="a rh" style="top:425px;color:#6a6a6a">14</div><div class="a rh" style="top:447px;color:#6a6a6a">15</div><div class="a rh" style="top:469px;color:#6a6a6a">16</div><div class="a rh" style="top:491px;color:#6a6a6a">17</div><div class="a rh" style="top:513px;color:#6a6a6a">18</div><div class="a rh" style="top:535px;color:#6a6a6a">19</div><div class="a rh" style="top:557px;color:#6a6a6a">20</div><div class="a rh" style="top:579px;color:#6a6a6a">21</div><div class="a rh" style="top:601px;color:#6a6a6a">22</div><div class="a rh" style="top:623px;color:#6a6a6a">23</div><div class="a c n" style="left:82px;top:138px;width:79px">3200000.00</div><div class="a c n" style="left:164px;top:138px;width:79px">2.60</div><div class="a c t" style="left:246px;top:138px;width:79px">Tidak puas</div><div class="a c n" style="left:328px;top:138px;width:124px">.00833</div><div class="a c n" style="left:82px;top:160px;width:79px">3500000.00</div><div class="a c n" style="left:164px;top:160px;width:79px">2.40</div><div class="a c t" style="left:246px;top:160px;width:79px">Tidak puas</div><div class="a c n" style="left:328px;top:160px;width:124px">.25615</div><div class="a c n" style="left:82px;top:182px;width:79px">2300000.00</div><div class="a c n" style="left:164px;top:182px;width:79px">2.70</div><div class="a c t" style="left:246px;top:182px;width:79px">Tidak puas</div><div class="a c n" style="left:328px;top:182px;width:124px">-.30911</div><div class="a c n" style="left:82px;top:204px;width:79px">2500000.00</div><div class="a c n" style="left:164px;top:204px;width:79px">3.20</div><div class="a c t" style="left:246px;top:204px;width:79px">Puas</div><div class="a c n" style="left:328px;top:204px;width:124px">.31650</div><div class="a c n" style="left:82px;top:226px;width:79px">3000000.00</div><div class="a c n" style="left:164px;top:226px;width:79px">3.50</div><div class="a c t" style="left:246px;top:226px;width:79px">Puas</div><div class="a c n" style="left:328px;top:226px;width:124px">.18992</div><div class="a c n" style="left:82px;top:248px;width:79px">4000000.00</div><div class="a c n" style="left:164px;top:248px;width:79px">3.80</div><div class="a c t" style="left:246px;top:248px;width:79px">Puas</div><div class="a c n" style="left:82px;top:270px;width:79px">1300000.00</div><div class="a c n" style="left:164px;top:270px;width:79px">2.30</div><div class="a c t" style="left:246px;top:270px;width:79px">Tidak puas</div><div class="a c n" style="left:82px;top:292px;width:79px">4000000.00</div><div class="a c n" style="left:164px;top:292px;width:79px">3.75</div><div class="a c t" style="left:246px;top:292px;width:79px">Tidak puas</div><div class="a c n" style="left:82px;top:314px;width:79px">3000000.00</div><div class="a c n" style="left:164px;top:314px;width:79px">3.45</div><div class="a c t" style="left:246px;top:314px;width:79px">Puas</div><div class="a c n" style="left:82px;top:336px;width:79px">3000000.00</div><div class="a c n" style="left:164px;top:336px;width:79px">3.60</div><div class="a c t" style="left:246px;top:336px;width:79px">Puas</div><div class="a" style="left:1159px;top:337px;width:72px;height:21px;border:1px solid #000"></div></div>
<div class="a" style="left:1px;top:645px;width:81px;height:16px;background:#e4eefb"></div>
<div class="a" style="left:2px;top:644px;width:79px;height:1px;background:#9aa4b4"></div>
<div class="a" style="left:1345px;top:139px;width:15px;height:507px;background:linear-gradient(180deg,#fbfbfc 0%,#fbfbfc 46%,#c6c4ce 98%);border-left:1px solid #2a7ad8;border-right:1px solid #3a6ab0"></div>
<div class="a" style="left:1346px;top:372px;width:1px;height:259px;background:linear-gradient(#6c6c72,#a0a0a8)"></div>
<div class="a" style="left:1346px;top:372px;width:13px;height:1px;background:#8a8a90"></div>
<div class="a" style="left:1345px;top:153px;width:15px;height:219px;background:linear-gradient(90deg,#1a80e8 0,#1a80e8 1px,#92b6e2 1px,#6a9cd6 35%,#4a86cc 65%,#3876c2 93%,#0a3a80 94%,#0a3a80 100%)"></div>
<div class="a" style="left:1345px;top:139px;width:15px;height:15px;background:#a6ccf8;border:1px solid #1a80e8;border-right-color:#0a3a80;border-bottom-color:#1a80e8"><svg class="a" style="left:1.5px;top:2.5px" width="10" height="6"><defs><linearGradient id="ag1" x1="0" y1="0" x2="1" y2="0"><stop offset="0" stop-color="#9a9a9a"/><stop offset="1" stop-color="#3a3a3a"/></linearGradient></defs><path d="M0 5.5 L5 0.5 L10 5.5Z" fill="url(#ag1)"/></svg></div>
<div class="a" style="left:1345px;top:631px;width:15px;height:15px;background:#a6ccf8;border:1px solid #2a7ad8;border-right-color:#1a4a90;border-bottom-color:#1a4a90"><svg class="a" style="left:1.5px;top:4px" width="10" height="6"><defs><linearGradient id="ag2" x1="0" y1="0" x2="1" y2="0"><stop offset="0" stop-color="#3a3a3a"/><stop offset="1" stop-color="#9a9a9a"/></linearGradient></defs><path d="M0 0.5 L5 5.5 L10 0.5Z" fill="url(#ag2)"/></svg></div>
<div class="a" style="left:82px;top:646px;width:1263px;height:15px;background:linear-gradient(90deg,#f4f2f5 0%,#f4f2f5 78%,#c4c2cc 100%);border-top:1px solid #2a7ad8;border-bottom:1px solid #3a6ab0"></div>
<div class="a" style="left:1070px;top:647px;width:260px;height:1px;background:linear-gradient(90deg,#77777c,#a0a0a8)"></div>
<div class="a" style="left:96px;top:646px;width:974px;height:15px;background:linear-gradient(#1a80e8 0,#1a80e8 1px,#a4c2e8 1px,#7aa8dc 35%,#5690d0 65%,#3a78c4 93%,#0a3a80 94%,#0a3a80 100%)"></div>
<div class="a" style="left:82px;top:646px;width:15px;height:15px;background:#a6ccf8;border:1px solid #2a7ad8;border-bottom-color:#1a4a90;border-right-color:#5a96e0"><svg class="a" style="left:3px;top:1.5px" width="6" height="10"><path d="M5.5 0 L0.5 5 L5.5 10Z" fill="#4a4a4a"/></svg></div>
<div class="a" style="left:1330px;top:646px;width:15px;height:15px;background:#a6ccf8;border:1px solid #2a7ad8;border-bottom-color:#1a4a90;border-right-color:#1a4a90"><svg class="a" style="left:4px;top:1.5px" width="6" height="10"><path d="M0.5 0 L5.5 5 L0.5 10Z" fill="#4a4a4a"/></svg></div>
<div class="a" style="left:1362px;top:115px;width:1px;height:548px;background:#e6fbff"></div>
<div class="a" style="left:1363px;top:115px;width:2px;height:549px;background:#9ccaff"></div>
<div class="a" style="left:1365px;top:115px;width:1px;height:551px;background:#6a8cb8"></div>
<svg class="a" style="left:1362px;top:380px" width="4" height="18" viewBox="1362 380 4 18"><circle cx="1365" cy="383.8" r="1.6" fill="#1c2c70"/><circle cx="1365" cy="389" r="1.6" fill="#1c2c70"/><circle cx="1365" cy="394.2" r="1.6" fill="#1c2c70"/></svg>
<div class="a" style="left:1px;top:661px;width:1360px;height:1px;background:#fff"></div>
<div class="a" style="left:0;top:663px;width:1366px;height:1px;background:#e6fbff"></div>
<div class="a" style="left:0;top:664px;width:1366px;height:2px;background:#9ccaff"></div>
<div class="a" style="left:0;top:666px;width:1366px;height:1px;background:#6a8cb8"></div>
<div class="a" style="left:0;top:667px;width:1366px;height:2px;background:#6a9ed8"></div>
<div class="a" style="left:0;top:669px;width:1366px;height:1px;background:#fff"></div>
<svg class="a" style="left:674px;top:662px" width="18" height="6" viewBox="674 662 18 6"><circle cx="677.7" cy="665.3" r="1.5" fill="#1c2c70"/><circle cx="682.8" cy="665.3" r="1.5" fill="#1c2c70"/><circle cx="687.9" cy="665.3" r="1.5" fill="#1c2c70"/></svg>
<div class="a" style="left:0;top:670px;width:1366px;height:35px;background:linear-gradient(#e6f0fc 0%,#e4e9f4 50%,#dcdce6 100%)"></div>
<div class="a" style="left:7px;top:669px;width:64px;height:31px;background:linear-gradient(#fcc44e,#fdd98a 55%,#fee6ad);border:1px solid #d9a441;border-top:none;border-radius:0 0 3px 3px;font-weight:bold;font-size:12.35px;line-height:35px;text-align:center;white-space:nowrap;box-shadow:0 1px 0 #9fb6d4">Data View</div>
<div class="a" style="left:73px;top:670px;width:82px;height:29px;background:linear-gradient(#b9d3ed,#8db5dd 60%,#7aa7d3);border-radius:0 0 4px 4px;font-size:12.45px;line-height:29px;text-align:center;white-space:nowrap">Variable View</div>
<div class="a" style="left:0;top:705px;width:1366px;height:23px;background:#e4eefb;border-top:1px solid #fff"></div>
<div class="a" style="left:3px;top:708px;width:921px;height:18px;border-top:1px solid #8e9298;border-left:1px solid #8e9298;border-bottom:1px solid #fff;border-right:1px solid #fff;font-size:12.2px;line-height:19px;padding-left:2px;white-space:nowrap;overflow:hidden;letter-spacing:0px"></div>
<div class="a" style="left:925px;top:708px;width:225px;height:18px;border-top:1px solid #8e9298;border-left:1px solid #8e9298;border-bottom:1px solid #fff;border-right:1px solid #fff;font-size:12.2px;line-height:19px;padding-left:2px;white-space:nowrap;overflow:hidden;letter-spacing:0.05px">IBM SPSS Statistics Processor is ready</div>
<div class="a" style="left:1151px;top:708px;width:17px;height:18px;border-top:1px solid #8e9298;border-left:1px solid #8e9298;border-bottom:1px solid #fff;border-right:1px solid #fff;font-size:12.2px;line-height:19px;padding-left:2px;white-space:nowrap;overflow:hidden;letter-spacing:0px"></div>
<div class="a" style="left:1169px;top:708px;width:26px;height:18px;border-top:1px solid #8e9298;border-left:1px solid #8e9298;border-bottom:1px solid #fff;border-right:1px solid #fff;font-size:12.2px;line-height:19px;padding-left:2px;white-space:nowrap;overflow:hidden;letter-spacing:0px"></div>
<div class="a" style="left:1196px;top:708px;width:78px;height:18px;border-top:1px solid #8e9298;border-left:1px solid #8e9298;border-bottom:1px solid #fff;border-right:1px solid #fff;font-size:12.2px;line-height:19px;padding-left:2px;white-space:nowrap;overflow:hidden;letter-spacing:0.28px">Unicode:ON</div>
<div class="a" style="left:1275px;top:708px;width:29px;height:18px;border-top:1px solid #8e9298;border-left:1px solid #8e9298;border-bottom:1px solid #fff;border-right:1px solid #fff;font-size:12.2px;line-height:19px;padding-left:2px;white-space:nowrap;overflow:hidden;letter-spacing:0px"></div>
<div class="a" style="left:1305px;top:708px;width:29px;height:18px;border-top:1px solid #8e9298;border-left:1px solid #8e9298;border-bottom:1px solid #fff;border-right:1px solid #fff;font-size:12.2px;line-height:19px;padding-left:2px;white-space:nowrap;overflow:hidden;letter-spacing:0px"></div>
<div class="a" style="left:1335px;top:708px;width:29px;height:18px;border-top:1px solid #8e9298;border-left:1px solid #8e9298;border-bottom:1px solid #fff;border-right:1px solid #fff;font-size:12.2px;line-height:19px;padding-left:2px;white-space:nowrap;overflow:hidden;letter-spacing:0px"></div>
<div class="a" style="left:1074.6px;top:652.6px;font-size:19px;color:rgba(125,125,128,.42);white-space:nowrap;letter-spacing:.28px">Activate Windows</div>
<div class="a" style="left:1072.8px;top:677px;font-size:15px;color:rgba(120,120,124,.5);white-space:nowrap;letter-spacing:-.04px">Go to Settings to activate Windows.</div>
<div class="a" style="left:365px;top:253px;width:516px;height:322px;border:1px solid #989898;background:#e4effb;box-shadow:0 3px 11px 0 rgba(0,0,0,.24),0 0 2px rgba(0,0,0,.22)"></div><div class="a" style="left:366px;top:254px;width:514px;height:30px;background:#fff"></div><div class="a" style="left:394.6px;top:263px;font-size:12px;color:#8a8a8a;white-space:nowrap;letter-spacing:.1px">Discriminant Analysis</div><svg class="a" style="left:858px;top:261px" width="14" height="14" viewBox="0 0 14 14"><path d="M2 2.2 L12 12.2 M12 2.2 L2 12.2" stroke="#5c5c5c" stroke-width="1" fill="none"/></svg><div class="a" style="left:376px;top:312px;width:150px;height:220px;border:1px solid #2a6fc0;background:#fff"></div><div class="a" style="left:379px;top:314px;width:144px;height:18px;background:#c3c3c3"></div><svg class="a" style="left:381.5px;top:315px" width="16" height="16" viewBox="0 0 16 16"><g transform="rotate(-45 8 7.6)"><rect x="0" y="5.4" width="16" height="4.4" fill="#fac800" stroke="#0c0c08" stroke-width="1.3"/><path d="M2.6 5.6v2.3M4.8 5.6v2.3M7 5.6v2.3M9.2 5.6v2.3M11.4 5.6v2.3M13.6 5.6v2.3" stroke="#2a2a08" stroke-width="1"/></g></svg><div class="a dl" style="left:401px;top:318px;letter-spacing:.1px">Unstandardized Re...</div><div class="a" style="left:536px;top:302px;width:32px;height:30px;border:1px solid #a8c9ee;border-radius:4px;background:linear-gradient(#d9e8fa,#cbe0f8 50%,#bcd7f6)"></div><svg class="a" style="left:544.8px;top:310.9px" width="16" height="14" viewBox="0 0 16 14"><path d="M0.2 1 C1.6 3.2 2.6 4.5 4.6 4.5 L7.5 4.5 L7.5 0 L14.3 6.4 L8.4 12.2 L8.4 8.9 L4.8 8.9 C2 8.9 0.2 6.3 0.2 1Z" fill="#7a7a7a"/></svg><div class="a" style="left:536px;top:403px;width:32px;height:30px;border:1px solid #2f74c8;border-radius:4px;background:linear-gradient(#cfe1f8 0%,#b4d1f5 40%,#7fb0ec 75%,#5f9ce6 100%)"></div><svg class="a" style="left:544.8px;top:411.9px" width="16" height="14" viewBox="0 0 16 14"><path d="M0.2 1 C1.6 3.2 2.6 4.5 4.6 4.5 L7.5 4.5 L7.5 0 L14.3 6.4 L8.4 12.2 L8.4 8.9 L4.8 8.9 C2 8.9 0.2 6.3 0.2 1Z" fill="#5a4fd0"/></svg><div class="a" style="left:536px;top:498px;width:32px;height:30px;border:1px solid #2f74c8;border-radius:4px;background:linear-gradient(#cfe1f8 0%,#b4d1f5 40%,#7fb0ec 75%,#5f9ce6 100%)"></div><svg class="a" style="left:544.8px;top:506.9px" width="16" height="14" viewBox="0 0 16 14"><path d="M0.2 1 C1.6 3.2 2.6 4.5 4.6 4.5 L7.5 4.5 L7.5 0 L14.3 6.4 L8.4 12.2 L8.4 8.9 L4.8 8.9 C2 8.9 0.2 6.3 0.2 1Z" fill="#5a4fd0"/></svg><div class="a dl" style="left:579px;top:298px;letter-spacing:.14px"><u>G</u>rouping Variable:</div><div class="a" style="left:578px;top:312px;width:210px;height:20px;border:1px solid #2a6fc0;background:#fff"></div><div class="a dl" style="left:581px;top:318px">Y(0 1)</div><div class="a btn dis" style="left:578px;top:340px;width:97px;height:24px"><u>D</u>efine Range...</div><div class="a dl" style="left:579px;top:376px;letter-spacing:.18px"><u>I</u>ndependents:</div><div class="a" style="left:578px;top:390px;width:210px;height:56px;border:1px solid #2a6fc0;background:#fff"></div><svg class="a" style="left:583.5px;top:393px" width="16" height="16" viewBox="0 0 16 16"><g transform="rotate(-45 8 7.6)"><rect x="0" y="5.4" width="16" height="4.4" fill="#fac800" stroke="#0c0c08" stroke-width="1.3"/><path d="M2.6 5.6v2.3M4.8 5.6v2.3M7 5.6v2.3M9.2 5.6v2.3M11.4 5.6v2.3M13.6 5.6v2.3" stroke="#2a2a08" stroke-width="1"/></g></svg><div class="a dl" style="left:604px;top:397px;font-size:11.9px;letter-spacing:.03px">Gaji Karyawan [X1]</div><svg class="a" style="left:583.5px;top:411px" width="16" height="16" viewBox="0 0 16 16"><g transform="rotate(-45 8 7.6)"><rect x="0" y="5.4" width="16" height="4.4" fill="#fac800" stroke="#0c0c08" stroke-width="1.3"/><path d="M2.6 5.6v2.3M4.8 5.6v2.3M7 5.6v2.3M9.2 5.6v2.3M11.4 5.6v2.3M13.6 5.6v2.3" stroke="#2a2a08" stroke-width="1"/></g></svg><div class="a dl" style="left:604px;top:415px;font-size:11.9px;letter-spacing:.18px">Jarak Tempuh [X2]</div><svg class="a" style="left:581px;top:450px" width="14" height="14" viewBox="0 0 14 14"><circle cx="7.1" cy="6.9" r="5.6" fill="#fff" stroke="#6c727c" stroke-width="1"/><circle cx="7.1" cy="6.9" r="3.5" fill="none" stroke="#a4c8ee" stroke-width="1"/></svg><div class="a dl" style="left:598px;top:452px;letter-spacing:.06px"><u>E</u>nter independents together</div><svg class="a" style="left:581px;top:472px" width="14" height="14" viewBox="0 0 14 14"><circle cx="7.1" cy="7.1" r="5.6" fill="#fff" stroke="#5c626c" stroke-width="1"/><circle cx="7.1" cy="7.1" r="3.5" fill="#2a78e0"/><circle cx="6.7" cy="6.7" r="1.5" fill="#5c9cf0"/></svg><div class="a dl" style="left:598px;top:474px;letter-spacing:.27px"><u>U</u>se stepwise method</div><div class="a dl" style="left:579px;top:494px;letter-spacing:.12px">Selec<u>t</u>ion Variable:</div><div class="a" style="left:578px;top:508px;width:150px;height:20px;border:1px solid #2a6fc0;background:#fff"></div><div class="a btn dis" style="left:736px;top:508px;width:52px;height:24px"><u>V</u>alue...</div><div class="a btn" style="left:796px;top:298px;width:74px;height:24px"><u>S</u>tatistics...</div><div class="a btn" style="left:796px;top:324px;width:74px;height:24px"><u>M</u>ethod...</div><div class="a btn" style="left:796px;top:350px;width:74px;height:24px"><u>C</u>lassify...</div><div class="a btn" style="left:796px;top:376px;width:74px;height:24px">S<u>a</u>ve...</div><div class="a btn dis" style="left:796px;top:402px;width:74px;height:24px"><u>B</u>ootstrap...</div><div class="a btn dflt" style="left:487px;top:540px;width:50px;height:24px">OK</div><div class="a btn" style="left:542px;top:540px;width:51px;height:24px"><u>P</u>aste</div><div class="a btn" style="left:597px;top:540px;width:51px;height:24px"><u>R</u>eset</div><div class="a btn" style="left:652px;top:540px;width:51px;height:24px">Cancel</div><div class="a btn" style="left:707px;top:540px;width:51px;height:24px">Help</div><svg class="a" style="left:374px;top:260px" width="17" height="17" viewBox="0 0 17 17"><defs><linearGradient id="gAi374" x1="0" y1="0" x2="1" y2="1"><stop offset="0" stop-color="#86bce6"/><stop offset="1" stop-color="#2a66ac"/></linearGradient></defs><circle cx="8" cy="8" r="7.9" fill="url(#gAi374)"/><rect x="2" y="4.6" width="11" height="7.2" fill="#f4f8fd"/><path d="M4 6.6h8M4 9.6h8" stroke="#3a78c8" stroke-width="1" stroke-dasharray="1.4 1"/><rect x="0" y="3" width="8.2" height="1.9" fill="#d8002c"/><rect x="3.1" y="0" width="2.1" height="8.6" fill="#d8002c"/><rect x="8.4" y="8.4" width="7.8" height="7.8" fill="#d81e40"/><rect x="9.4" y="9.3" width="5.8" height="1" fill="#ec6a7c"/><g fill="#fff"><rect x="9.4" y="11.1" width="1.6" height="1.2"/><rect x="11.7" y="11.1" width="1.4" height="1.2"/><rect x="13.8" y="11.1" width="1.4" height="1.2"/><rect x="9.4" y="13" width="1.6" height="1.2"/><rect x="11.7" y="13" width="1.4" height="1.2"/><rect x="13.8" y="13" width="1.4" height="1.2"/><rect x="9.4" y="14.8" width="1.6" height=".9" opacity=".6"/><rect x="11.7" y="14.8" width="1.4" height=".9" opacity=".6"/><rect x="13.8" y="14.8" width="1.4" height=".9" opacity=".6"/></g></svg>
<div class="a" id="task" style="left:0;top:728px;width:1366px;height:40px;background:linear-gradient(90deg,#1e3742 0%,#1d3340 45%,#1b2a40 75%,#1a2440 100%)"></div>
<div class="a" style="left:48px;top:728px;width:344px;height:40px;background:#f2f2f2;border-top:1px solid #cfcfcf;border-bottom:1px solid #cfcfcf"></div>
<div class="a" style="left:89px;top:742px;font-size:14.6px;color:#222;white-space:nowrap;letter-spacing:-.06px">Type here to search</div>
<svg class="a" style="left:0;top:728px" width="1366" height="40" viewBox="0 728 1366 40"><defs>
<linearGradient id="tEd" x1="0" y1="0" x2="1" y2="1"><stop offset="0" stop-color="#35c1f1"/><stop offset=".5" stop-color="#1b7fd0"/><stop offset="1" stop-color="#0c4a9c"/></linearGradient>
<linearGradient id="tEg" x1="0" y1="1" x2="1" y2="0"><stop offset="0" stop-color="#1fa0c8"/><stop offset=".6" stop-color="#4fd06a"/><stop offset="1" stop-color="#9fe04a"/></linearGradient>
<linearGradient id="tCl" x1="0" y1="0" x2="0" y2="1"><stop offset="0" stop-color="#f4f8ff"/><stop offset="1" stop-color="#9fc0ec"/></linearGradient>
<linearGradient id="tMl" x1="0" y1="0" x2="0" y2="1"><stop offset="0" stop-color="#2a8ae0"/><stop offset="1" stop-color="#0f5ab4"/></linearGradient>
<linearGradient id="tSp" x1="0" y1="0" x2="1" y2="1"><stop offset="0" stop-color="#8cc0ec"/><stop offset="1" stop-color="#2e6cb4"/></linearGradient>
</defs><path d="M16 742.2 L22.6 741.3 L22.6 747.4 L16 747.4Z M23.6 741.1 L32.2 739.9 L32.2 747.4 L23.6 747.4Z M16 748.4 L22.6 748.4 L22.6 754.6 L16 753.7Z M23.6 748.4 L32.2 748.4 L32.2 756 L23.6 754.8Z" fill="#fff"/><circle cx="70.3" cy="745.8" r="5.3" fill="none" stroke="#1c1c1c" stroke-width="1.3"/><path d="M66.6 749.6 L60.4 755.4" stroke="#1c1c1c" stroke-width="1.4"/><circle cx="415.9" cy="747.8" r="6.7" fill="none" stroke="#fff" stroke-width="1.9"/><g fill="none" stroke="#fff" stroke-width="1.15"><path d="M456.3 739.9v2.4h10.4v-2.4"/><rect x="456.3" y="744.7" width="10.4" height="5.9"/><path d="M456.3 755v-2.4h10.4v2.4"/><path d="M470.5 739.9v2.9M470.5 747.6v7.4" stroke-width="1.3"/></g><rect x="469" y="744.1" width="3" height="2.7" fill="#fff"/><circle cx="515.1" cy="747.8" r="12.2" fill="url(#tEd)"/><path d="M503.4 744 C505 737.6 511 735.4 516 735.6 C523.5 735.9 527.8 741.6 527.2 747.6 C526.8 751.4 523.6 753.2 520.4 752.8 C517.6 752.4 516.8 750.4 517.8 748.6 C518.6 747 518.4 744.8 516.4 743.4 C512.6 740.8 506.4 741 503.4 744Z" fill="url(#tEg)"/><path d="M509.6 749 C509.4 745.6 512 743.2 515 743.2 C517.4 743.3 518.6 745.2 517.8 747.2 C516.6 750 518 753.6 522.6 754 C524.4 754.1 525.8 753.6 526.6 753 C524.6 757.4 520 759.6 516 759.2 C512 758.4 509.8 753.4 509.6 749Z" fill="#0d4fa4" opacity=".95"/><path d="M553.2 741 Q553.2 739.6 554.6 739.6 L560.8 739.6 L562.4 741.6 L574.4 741.6 L574.4 756.4 L553.2 756.4Z" fill="#f0a400"/><rect x="553.2" y="742.4" width="21.2" height="14" fill="#ffd960"/><path d="M557.4 756.4 L557.4 751 Q557.4 749.4 559 749.4 L568.6 749.4 Q570.2 749.4 570.2 751 L570.2 756.4 L567 756.4 L567 752.6 L560.6 752.6 L560.6 756.4Z" fill="#3b96ea"/><path d="M600.8 744.6 L613 736.4 L625.2 744.6 L625.2 759 L600.8 759Z" fill="#0f68c4"/><path d="M603.4 744.8 L622.6 744.8 L622.6 752 L603.4 752Z" fill="#fff"/><path d="M600.8 745.2 L613 753.6 L625.2 745.2 L625.2 759 L600.8 759Z" fill="#2ba2f2"/><path d="M600.8 759 L613 751.6 L625.2 759Z" fill="#1c8ae4"/><rect x="609.2" y="747.4" width="27.2" height="15.8" rx="7.9" fill="#2b3138" stroke="#8e949c" stroke-width="1"/><text x="622.8" y="759.4" text-anchor="middle" font-family="Liberation Sans,sans-serif" font-weight="bold" font-size="11" fill="#fff">99+</text><defs><linearGradient id="oW" x1="0" y1="0" x2="1" y2="1"><stop offset="0" stop-color="#d4e4fa"/><stop offset="1" stop-color="#4f82dc"/></linearGradient></defs><rect x="650.4" y="736.2" width="21.4" height="21.8" rx="2.4" fill="url(#oW)" stroke="#1c3c9c" stroke-width="1.2"/><path d="M660.9 749.4000000000001 L671.8 746.6 L671.4 756.8000000000001 L652.8 756.8000000000001 Z" fill="#fff" opacity=".93"/><path d="M662.9 751.6 l7 -1.8 M661.4 754.2 l9 -2" stroke="#4f82dc" stroke-width="1" opacity=".6"/><text x="661.4" y="751.4000000000001" text-anchor="middle" font-family="Liberation Sans,sans-serif" font-weight="bold" font-size="16.5" fill="#1a48bc">W</text><path d="M699 740.8 L722 740.8 L722 757 Q722 760 719 760 L702 760 Q699 760 699 757Z" fill="#f9f9f9"/><path d="M704.8 741.4 L704.8 739.6 Q704.8 737.6 706.8 737.6 L714.6 737.6 Q716.6 737.6 716.6 739.6 L716.6 741.4" fill="none" stroke="#2ea8f0" stroke-width="1.6"/><rect x="705.9" y="746.3" width="4.2" height="4.2" fill="#f25022"/><rect x="711.3" y="746.3" width="4.2" height="4.2" fill="#7fba00"/><rect x="705.9" y="751.6" width="4.2" height="4.2" fill="#00a4ef"/><rect x="711.3" y="751.6" width="4.2" height="4.2" fill="#ffb900"/><path d="M748.6 750.4 L756.4 746.6 L760 749.8 L754.6 754.4Z" fill="#3a76c4"/><path d="M756.4 746.6 C760 743 762 738.4 764.2 737.2 C766 738 769 748 772 756.8 C768.6 755.6 766.4 752.6 764.4 753.4 C762 754.4 760.4 757 758.4 758.4 L754.6 754.4 L760 749.8Z" fill="#e2501c"/><path d="M764.2 737.2 C766 738 769 748 772 756.8 C768.6 755.6 766.4 752.6 764.4 753.4 C765 748 764.8 742 764.2 737.2Z" fill="#a02810"/><path d="M756.4 746.6 C760 743 762 738.4 764.2 737.2 C763 742 761.6 746.4 760 749.8Z" fill="#f4a030"/><circle cx="809" cy="747.4" r="12" fill="#dd4b3e"/><path d="M809 747.4 L798.6 741.4 A12 12 0 0 0 803 757.8 Z" fill="#19a15f"/><path d="M809 747.4 L803 757.8 A12 12 0 0 0 809 759.4 Z" fill="#19a15f"/><path d="M809 747.4 L809 759.4 A12 12 0 0 0 819.4 741.4 Z" fill="#ffcd42"/><path d="M798.6 741.4 A12 12 0 0 1 819.4 741.4 L809 741.4Z" fill="#dd4b3e"/><circle cx="809" cy="747.4" r="5.6" fill="#fff"/><circle cx="809" cy="747.4" r="4.4" fill="#4a8af4"/><circle cx="815.2" cy="753.8" r="7.4" fill="#0c4a9e" stroke="#1d3340" stroke-width=".6"/><text x="815.2" y="757.6" text-anchor="middle" font-family="Liberation Sans,sans-serif" font-size="11" fill="#fff">c</text><rect x="834" y="728" width="48" height="40" fill="#a5612c"/><rect x="834" y="765.6" width="48" height="2.4" fill="#f7892a"/><g transform="translate(1.5 .8)"><path d="M856.4 736 A11 11 0 1 1 850.6 756.4 L845 758 L846.6 752.6 A11 11 0 0 1 856.4 736Z" fill="#fff"/><circle cx="856.4" cy="747" r="9.2" fill="#2fc24e"/><path d="M852.4 742.4 C851.4 743.6 851.6 745.6 853.4 748 C855.4 750.6 858 752 859.8 751.6 C860.8 751.2 861.4 750.2 861.2 749.6 L858.8 748.4 L857.8 749.4 C856.6 749 855 747.4 854.6 746.2 L855.4 745.2 L854.4 742.6Z" fill="#fff"/></g><circle cx="863.8" cy="754" r="7.8" fill="#f0121e"/><text x="863.8" y="759" text-anchor="middle" font-family="Liberation Sans,sans-serif" font-size="14" fill="#fff">2</text><defs><linearGradient id="oP" x1="0" y1="0" x2="1" y2="1"><stop offset="0" stop-color="#fbe0cc"/><stop offset="1" stop-color="#ee7a3a"/></linearGradient></defs><rect x="895.4" y="736.2" width="21.4" height="21.8" rx="2.4" fill="url(#oP)" stroke="#c8400c" stroke-width="1.2"/><path d="M905.9 749.4000000000001 L916.8 746.6 L916.4 756.8000000000001 L897.8 756.8000000000001 Z" fill="#fff" opacity=".93"/><path d="M907.9 751.6 l7 -1.8 M906.4 754.2 l9 -2" stroke="#ee7a3a" stroke-width="1" opacity=".6"/><text x="902.5999999999999" y="751.4000000000001" text-anchor="middle" font-family="Liberation Sans,sans-serif" font-weight="bold" font-size="17" fill="#d8440c">P</text><circle cx="911" cy="749.4" r="3" fill="#e8602a"/><circle cx="911.6" cy="748.8" r="1.2" fill="#fbd0b8"/><defs><linearGradient id="oX" x1="0" y1="0" x2="1" y2="1"><stop offset="0" stop-color="#d4ecc4"/><stop offset="1" stop-color="#58b048"/></linearGradient></defs><rect x="944.4" y="736.2" width="21.4" height="21.8" rx="2.4" fill="url(#oX)" stroke="#1a7a2c" stroke-width="1.2"/><path d="M954.9 749.4000000000001 L965.8 746.6 L965.4 756.8000000000001 L946.8 756.8000000000001 Z" fill="#fff" opacity=".93"/><path d="M956.9 751.6 l7 -1.8 M955.4 754.2 l9 -2" stroke="#58b048" stroke-width="1" opacity=".6"/><text x="952.4" y="751.4000000000001" text-anchor="middle" font-family="Liberation Sans,sans-serif" font-weight="bold" font-size="17" fill="#2a8a24">X</text><rect x="981" y="728" width="44.6" height="40" fill="#414d5c"/><rect x="1025.6" y="728" width="3.4" height="40" fill="#4a5564"/><circle cx="1004.9" cy="747.9" r="12" fill="url(#tSp)"/><text x="1002.6" y="753" text-anchor="middle" font-family="Liberation Sans,sans-serif" font-size="15" fill="#e8f2fc">Σ</text><text x="1010.6" y="746.4" text-anchor="middle" font-family="Liberation Sans,sans-serif" font-size="7.5" fill="#e8f2fc">α</text><path d="M1008.6 752.4h4M1010.6 750.4v4" stroke="#e8f2fc" stroke-width=".9"/><rect x="495.3" y="765.8" width="39.5" height="2.2" fill="#76b9ed"/><rect x="544" y="765.8" width="40.0" height="2.2" fill="#76b9ed"/><rect x="642" y="765.8" width="31.0" height="2.2" fill="#76b9ed"/><rect x="789" y="765.8" width="40.0" height="2.2" fill="#76b9ed"/><rect x="887" y="765.8" width="40.0" height="2.2" fill="#76b9ed"/><rect x="936" y="765.8" width="31.0" height="2.2" fill="#76b9ed"/><rect x="981" y="765.8" width="48.0" height="2.2" fill="#76b9ed"/><rect x="673.6" y="765.8" width="8.4" height="2.2" fill="#4f84b4"/><rect x="967.6" y="765.8" width="8.4" height="2.2" fill="#4f84b4"/><circle cx="1097.6" cy="745" r="5.8" fill="#f7941d"/><path d="M1085 758.6 C1080.6 758.6 1078.8 753.4 1082.4 751.2 C1082 746.4 1088 744.2 1091 747.6 C1094 743.6 1100.6 745.6 1100.2 750.6 C1105 750.4 1106 757.6 1101 758.6Z" fill="url(#tCl)"/><text x="1112.4" y="754" font-family="Liberation Sans,sans-serif" font-size="14.2" fill="#e8ecf0" letter-spacing="-.9">26°C</text><path d="M1158.9 750.9 L1164.9 744.7 L1171 750.9" fill="none" stroke="#fff" stroke-width="1.3"/><g fill="none" stroke="#fff" stroke-width="1.25"><path d="M1184.2 753.6 A10.3 10.3 0 0 1 1194.5 743.3"/><path d="M1187.2 753.6 A7.3 7.3 0 0 1 1194.5 746.3"/><path d="M1190.2 753.6 A4.3 4.3 0 0 1 1194.5 749.3"/></g><circle cx="1194.6" cy="753.5" r="1.6" fill="#fff"/><path d="M1205.6 745.6h2.6l3.4-3.2v11.4l-3.4-3.2h-2.6z" fill="none" stroke="#fff" stroke-width="1.05" stroke-linejoin="round"/><path d="M1213.6 745.6 A3.6 3.6 0 0 1 1213.6 750.6 M1215.8 743.4 A6.6 6.6 0 0 1 1215.8 752.8" fill="none" stroke="#fff" stroke-width="1"/><path d="M1218.4 741.4 A9.4 9.4 0 0 1 1218.4 754.8" fill="none" stroke="#fff" stroke-width=".9" opacity=".4"/><g fill="#fff"><path d="M1232.9 741.9l3 1.8-3 1.8-3-1.8z M1241 741.9l3 1.8-3 1.8-3-1.8z M1232.9 746.7l3 1.8-3 1.8-3-1.8z"/><circle cx="1234.6" cy="752.6" r=".8"/></g><circle cx="1240.6" cy="751.5" r="4.6" fill="#e0102c"/><path d="M1238.8 749.7l3.6 3.6M1242.4 749.7l-3.6 3.6" stroke="#fff" stroke-width="1"/><text x="1281" y="743" text-anchor="middle" font-family="Liberation Sans,sans-serif" font-size="12" fill="#fff" letter-spacing="-.2">5:00 AM</text><text x="1281.4" y="761" text-anchor="middle" font-family="Liberation Sans,sans-serif" font-size="12" fill="#fff" letter-spacing="-.2">11/27/2022</text><path d="M1325.4 740.4h14.6v11.4h-9.6l-2.6 2.8v-2.8h-2.4z" fill="#fff"/><path d="M1328 743.6h9.6M1328 746.2h9.6M1328 748.8h9.6" stroke="#1b2740" stroke-width=".9"/><circle cx="1340.2" cy="754.8" r="7.8" fill="#2a3242" stroke="#c8ccd2" stroke-width="1"/><text x="1340.2" y="758.8" text-anchor="middle" font-family="Liberation Sans,sans-serif" font-size="11" fill="#fff">35</text></svg>
</body></html>
